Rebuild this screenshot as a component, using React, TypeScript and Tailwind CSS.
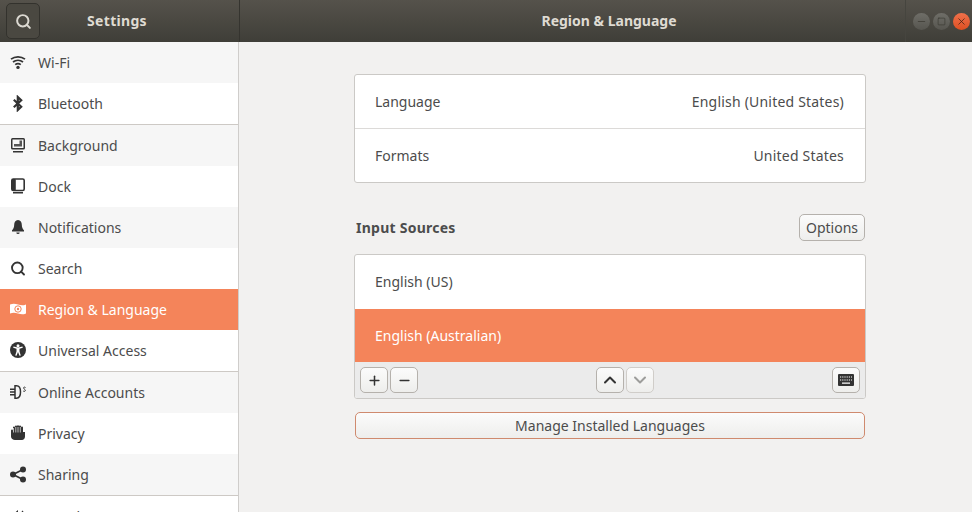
import { Search, Plus, Minus, ChevronUp, ChevronDown, X, Square } from "lucide-react";
import type { ReactNode } from "react";

function WifiIcon() {
  return (
    <svg viewBox="0 0 16 16" className="w-4 h-4" fill="none" stroke="#333" strokeWidth="1.7">
      <path d="M1 5.2c4-3.2 10-3.200 14 0" />
      <path d="M3 8c2.900-2.300 7.100-2.300 10 0" />
      <path d="M5.200 10.600c1.600-1.200 4-1.200 5.600 0" />
      <circle cx="8" cy="13.400" r="1.700" fill="#333" stroke="none" />
    </svg>
  );
}

function BluetoothIcon() {
  return (
    <svg viewBox="0 0 16 16" className="w-[17px] h-[17px]" fill="none" stroke="#333" strokeWidth="2.2">
      <path d="M3.800 4.300l7.400 7-3.400 3.200V1.500l3.400 3.200-7.400 7" />
    </svg>
  );
}

function BackgroundIcon() {
  return (
    <svg viewBox="0 0 16 16" className="w-4 h-4">
      <rect x="1" y="1" width="14" height="11.500" rx="1.500" fill="#333" />
      <rect x="2.500" y="2.500" width="11" height="8.500" fill="#f6f6f6" />
      <path d="M4 9.500h8V3.500h-2.500v3.500H4z" fill="#555" />
      <rect x="3" y="14" width="10" height="1.500" fill="#333" />
    </svg>
  );
}

function DockIcon() {
  return (
    <svg viewBox="0 0 16 16" className="w-4 h-4">
      <rect x="1.800" y="1" width="12.400" height="11.500" rx="1.500" fill="none" stroke="#333" strokeWidth="1.600" />
      <rect x="1.800" y="1" width="4" height="11.500" rx="1" fill="#333" />
      <rect x="3" y="14" width="10" height="1.500" fill="#333" />
    </svg>
  );
}

function BellIcon() {
  return (
    <svg viewBox="0 0 16 16" className="w-4 h-4" fill="#333">
      <path d="M8 1c-2.600 0-3.800 2.200-3.800 4.700 0 3-1.200 4.600-2.200 5.600v1.200h12v-1.200c-1-1-2.200-2.600-2.200-5.600C11.800 3.200 10.600 1 8 1z" />
      <path d="M6.300 13.500h3.400a1.700 1.500 0 0 1-3.400 0z" />
    </svg>
  );
}

function RegionIcon() {
  return (
    <svg viewBox="0 0 16 12" className="w-[16px] h-[12px]">
      <path d="M0 1.500c3-1.200 5-1 8 0s5 1.200 8 0v9c-3 1.200-5 1-8 0s-5-1.200-8 0z" fill="#fff" />
      <circle cx="8" cy="6" r="3.200" fill="none" stroke="#f4845a" strokeWidth="1" />
      <circle cx="8" cy="6" r="1.200" fill="#f4845a" />
    </svg>
  );
}

function AccessIcon() {
  return (
    <svg viewBox="0 0 16 16" className="w-4 h-4">
      <circle cx="8" cy="8" r="8" fill="#333" />
      <circle cx="8" cy="3.800" r="1.500" fill="#fff" />
      <path d="M3.200 5.800l3.300 .9v2.700l-1.300 4 1.300 .4L8 10l1.500 3.800 1.300-.4-1.300-4V6.700l3.300-.9-.3-1.200L8 5.600 3.500 4.600z" fill="#fff" />
    </svg>
  );
}

function AccountsIcon() {
  return (
    <svg viewBox="0 0 16 16" className="w-4 h-4" fill="none" stroke="#333" strokeWidth="1.500">
      <path d="M0 5.300h5M0 8h5M0 10.700h5" />
      <path d="M5 1.800h1.500c2.500 0 4 2.800 4 6.200s-1.500 6.200-4 6.200H5z" />
      <path d="M15.500 3.500c-1-.8-2.200-.3-1.900.7s1.700 1.100 1.700 2.200-1.300 1.300-2.100 .6" strokeWidth="1" />
    </svg>
  );
}

function HandIcon() {
  return (
    <svg viewBox="0 0 16 16" className="w-4 h-4" fill="#333">
      <path d="M1 5.500a1 1 0 0 1 2 0V2.500a1 1 0 0 1 2 0V1.500a1 1 0 0 1 2 0V1.200a1 1 0 0 1 2 0v.3a1 1 0 0 1 2 0v1a1 1 0 0 1 2 0V7H15v4.500c0 2-1.500 3.500-3 3.500H5c-2 0-4-1.200-4-3.500z" />
      <path d="M3.500 3v4.500M5.800 2v5.500M8 2v5.500M10.300 2v5.500" stroke="#f9f9f9" strokeWidth=".7" />
    </svg>
  );
}

function ShareIcon() {
  return (
    <svg viewBox="0 0 16 16" className="w-[17px] h-[17px]" fill="#333" stroke="#333">
      <circle cx="3" cy="8" r="3" stroke="none" />
      <circle cx="13" cy="3" r="3" stroke="none" />
      <circle cx="13" cy="13" r="3" stroke="none" />
      <path d="M3 8L13 3M3 8L13 13" strokeWidth="1.800" />
    </svg>
  );
}

function SoundIcon() {
  return (
    <svg viewBox="0 0 16 16" className="w-4 h-4" fill="#333">
      <path d="M1 5.500h3L8 2v12l-4-3.500H1z" />
      <path d="M10 5c1.500 1.500 1.500 4.500 0 6M12 3c2.500 2.500 2.500 7.500 0 10" fill="none" stroke="#333" strokeWidth="1.300" />
    </svg>
  );
}

function KeyboardIcon() {
  return (
    <svg viewBox="0 0 16 12" className="w-[16px] h-[12px]">
      <rect width="16" height="12" rx="1" fill="#333" />
      <path d="M2 3h12M2 6h12" stroke="#fff" strokeWidth="1.200" strokeDasharray="1.200 1" />
      <path d="M4 9.200h8" stroke="#fff" strokeWidth="1.200" />
    </svg>
  );
}

type Row = { name: string; icon: ReactNode; gray?: boolean; active?: boolean; divider?: boolean };

const rows: Row[] = [
  { name: "Wi-Fi", icon: <WifiIcon />, gray: true },
  { name: "Bluetooth", icon: <BluetoothIcon />, divider: true },
  { name: "Background", icon: <BackgroundIcon />, gray: true },
  { name: "Dock", icon: <DockIcon /> },
  { name: "Notifications", icon: <BellIcon />, gray: true },
  { name: "Search", icon: <Search size={17} strokeWidth={2.8} color="#333" /> },
  { name: "Region & Language", icon: <RegionIcon />, active: true },
  { name: "Universal Access", icon: <AccessIcon />, divider: true },
  { name: "Online Accounts", icon: <AccountsIcon />, gray: true },
  { name: "Privacy", icon: <HandIcon /> },
  { name: "Sharing", icon: <ShareIcon />, gray: true, divider: true },
  { name: "Sound", icon: <SoundIcon /> },
];

function SmallButton({ children, className }: { children: ReactNode; className?: string }) {
  return (
    <div
      className={`w-[28px] h-[26px] flex items-center justify-center rounded-[5px] border border-[#b5b1ac] bg-gradient-to-b from-[#fbfbfb] to-[#eeeeec] ${className ?? ""}`}
    >
      {children}
    </div>
  );
}

function WindowButton({ children, close }: { children: ReactNode; close?: boolean }) {
  return (
    <div
      className={`w-[17px] h-[17px] rounded-full flex items-center justify-center bg-gradient-to-b ${
        close ? "from-[#f0704a] to-[#dd4f20]" : "from-[#6f6e68] to-[#56554f]"
      }`}
    >
      {children}
    </div>
  );
}

export default function App() {
  return (
    <div className="w-[972px] h-[512px] overflow-hidden flex flex-col bg-[#f2f1f0] text-[#4c4c4c] text-[14px] font-['Noto_Sans',sans-serif]">
      {/* Title bar */}
      <header className="h-[42px] shrink-0 flex text-[#dfdbd2] bg-gradient-to-b from-[#55524b] to-[#3f3e38]">
        <div className="w-[240px] shrink-0 flex items-center border-r border-[#35342f] pl-[6px]">
          <div className="w-[34px] h-[36px] flex items-center justify-center rounded-[5px] border border-[#33322d] bg-[#4a4841]">
            <Search size={17} strokeWidth={2.8} color="#dcd9d2" />
          </div>
          <div className="w-[154px] pb-[2px] text-center font-bold tracking-[0.3px]">Settings</div>
        </div>
        <div className="flex-1 flex items-center justify-center font-bold pl-[73px] pb-[2px]">Region &amp; Language</div>
        <div className="w-[67px] flex items-center gap-[3px] pl-[7px] border-l border-[#46453f]">
          <WindowButton><Minus size={11} color="#38362f" strokeWidth={1.5} /></WindowButton>
          <WindowButton><Square size={9} color="#38362f" strokeWidth={1.6} /></WindowButton>
          <WindowButton close><X size={11} color="#3c2015" strokeWidth={1.6} /></WindowButton>
        </div>
      </header>

      <div className="flex-1 flex min-h-0">
        {/* Sidebar */}
        <aside className="w-[239px] shrink-0 border-r border-[#cfcdcb] bg-white overflow-hidden">
          {rows.map((row) => (
            <div
              key={row.name}
              className={`flex items-center gap-[12px] pl-[10px] ${row.divider ? "h-[42px] border-b border-[#cdc9c5]" : "h-[41px]"} ${
                row.active ? "bg-[#f4845a] text-white" : row.gray ? "bg-[#f6f6f6]" : "bg-white"
              }`}
            >
              <span className="w-4 h-4 flex items-center justify-center -mt-px">{row.icon}</span>
              <span>{row.name}</span>
            </div>
          ))}
        </aside>

        {/* Content */}
        <main className="flex-1 pt-[32px] pl-[115px]">
          <div className="w-[512px]">
            <section className="h-[109px] flex flex-col rounded-[3px] border border-[#cbc9c6] bg-white">
              <div className="h-[54px] flex items-center justify-between pl-[20px] pr-[21px] border-b border-[#dcdad8]">
                <span>Language</span>
                <span className="tracking-[0.2px]">English (United States)</span>
              </div>
              <div className="flex-1 flex items-center justify-between pl-[20px] pr-[21px]">
                <span>Formats</span>
                <span className="tracking-[0.2px]">United States</span>
              </div>
            </section>

            <div className="h-[27px] mt-[31px] flex items-center justify-between pl-[2px] pr-[1px]">
              <span className="font-bold tracking-[0.25px]">Input Sources</span>
              <div className="w-[66px] h-[27px] flex items-center justify-center rounded-[5px] border border-[#b5b1ac] bg-gradient-to-b from-[#fbfbfb] to-[#eeeeec]">
                Options
              </div>
            </div>

            <section className="mt-[13px] h-[145px] flex flex-col rounded-[3px] border border-[#cbc9c6] bg-white overflow-hidden">
              <div className="h-[54px] pb-[1px] flex items-center px-[20px]">English (US)</div>
              <div className="h-[53px] flex items-center px-[20px] bg-[#f4845a] text-white">English (Australian)</div>
              <div className="flex-1 flex items-center justify-between px-[5px] bg-[#ebebeb]">
                <div className="flex gap-[2px]">
                  <SmallButton><Plus size={15} strokeWidth={2.4} color="#333" /></SmallButton>
                  <SmallButton><Minus size={15} strokeWidth={2.4} color="#333" /></SmallButton>
                </div>
                <div className="flex gap-[2px]">
                  <SmallButton><ChevronUp size={20} strokeWidth={2.4} color="#333" /></SmallButton>
                  <SmallButton className="border-[#d0cdc9]"><ChevronDown size={20} strokeWidth={2.4} color="#9d9d9b" /></SmallButton>
                </div>
                <SmallButton><KeyboardIcon /></SmallButton>
              </div>
            </section>

            <div className="mt-[13px] mx-[1px] h-[27px] flex items-center justify-center rounded-[5px] border border-[#cf8a6e] bg-gradient-to-b from-[#fbfbfb] to-[#eeeeec]">
              Manage Installed Languages
            </div>
          </div>
        </main>
      </div>
    </div>
  );
}
